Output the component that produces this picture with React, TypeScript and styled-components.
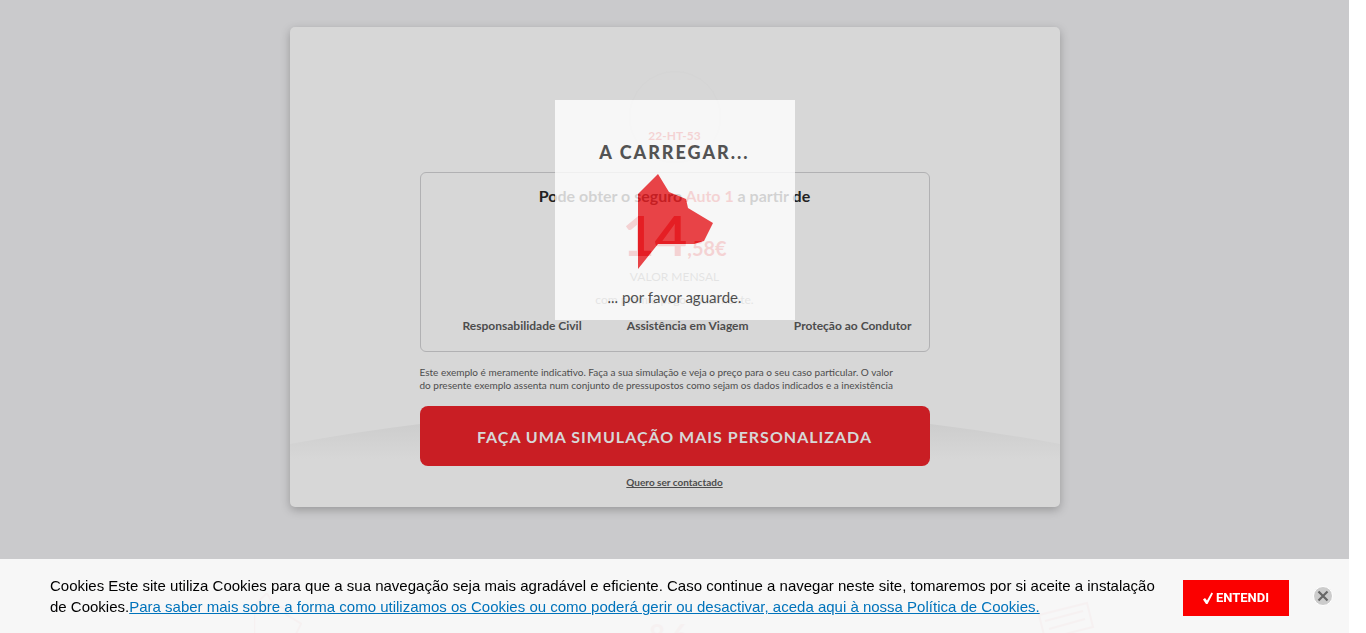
import React from "react";
import styled, { createGlobalStyle } from "styled-components";

const GlobalStyle = createGlobalStyle`
  * { box-sizing: border-box; }
  html, body { margin: 0; padding: 0; background: #fff; }
  body { font-family: Lato, "Liberation Sans", sans-serif; color: #4d4d4d; }
  h1, h2, p, ul { margin: 0; padding: 0; }
`;

const Page = styled.div`
  position: relative;
  height: 100vh;
  margin-right: 17px;
  padding-top: 27px;
  overflow: hidden;
  background: #cacacc;
`;

const Card = styled.main`
  position: relative;
  display: flex;
  flex-direction: column;
  align-items: center;
  max-width: 770px;
  min-height: 480px;
  margin: 0 auto;
  padding: 44px 24px 16px;
  border-radius: 5px;
  background: #d7d7d7;
  box-shadow: 0 3px 10px rgba(0, 0, 0, 0.25);
`;

const Wave = styled.svg`
  position: absolute;
  left: 0;
  bottom: 48px;
  width: 100%;
  height: 50px;
`;

const Content = styled.div`
  position: relative;
  display: flex;
  flex-direction: column;
  width: 100%;
  max-width: 510px;
`;

const PlateBadge = styled.div`
  display: flex;
  align-items: center;
  justify-content: center;
  width: 92px;
  height: 92px;
  margin: 0 auto 9px;
  padding-top: 36px;
  border: 1px solid #d5d5d5;
  border-radius: 50%;
  color: #c91e24;
  font-size: 12px;
  font-weight: 700;
  white-space: nowrap;
`;

const Quote = styled.section`
  display: flex;
  flex-direction: column;
  align-items: center;
  min-height: 180px;
  padding-top: 13px;
  border: 1px solid #b1b1b3;
  border-radius: 6px;
`;

const QuoteTitle = styled.h1`
  font-size: 16px;
  line-height: 20px;
  font-weight: 700;
  color: #222;
`;

const Accent = styled.span`
  color: #c91e24;
`;

const Price = styled.p`
  display: flex;
  align-items: baseline;
  height: 59px;
  line-height: 58px;
  font-size: 56px;
  font-weight: 700;
  color: #c91e24;
`;

const Cents = styled.span`
  font-size: 20px;
`;

const Note = styled.p`
  font-size: 12px;
  line-height: 23px;
  color: #777;
`;

const Covers = styled.ul`
  display: flex;
  justify-content: space-between;
  width: 100%;
  padding: 5px 17px 0 42px;
  list-style: none;
  font-size: 12px;
  line-height: 20px;
  font-weight: 700;
`;

const Disclaimer = styled.p`
  max-width: 480px;
  margin-top: 14px;
  font-size: 10px;
  line-height: 13px;
`;

const MainButton = styled.button`
  height: 60px;
  margin-top: 14px;
  border: 0;
  border-radius: 8px;
  background: #c91e24;
  color: #d7d7d7;
  font-family: inherit;
  font-size: 16px;
  font-weight: 700;
  letter-spacing: 1px;
`;

const ContactLink = styled.a`
  align-self: center;
  margin-top: 10px;
  color: #4d4d4d;
  font-size: 10px;
  line-height: 13px;
  font-weight: 700;
`;

const Loader = styled.div`
  position: absolute;
  top: 100px;
  left: 50%;
  display: flex;
  flex-direction: column;
  align-items: center;
  width: 240px;
  height: 220px;
  margin-left: -120px;
  padding-top: 40px;
  background: #fff;
  opacity: 0.8;
  color: #333;
`;

const LoaderTitle = styled.h2`
  font-size: 18px;
  line-height: 24px;
  font-weight: 900;
  letter-spacing: 2px;
`;

const LoaderMark = styled.svg`
  width: 78px;
  height: 96px;
  margin-top: 10px;
`;

const LoaderText = styled.p`
  margin-top: 17px;
  font-size: 15px;
  line-height: 20px;
`;

const Awards = styled.section`
  display: flex;
  justify-content: space-between;
  max-width: 842px;
  margin: 86px auto 0;
  color: #c91e24;
  opacity: 0.2;
`;

const Score = styled.span`
  padding-top: 24px;
  font-size: 28px;
  line-height: 34px;
  font-weight: 700;
`;

const CookieBar = styled.aside`
  position: fixed;
  left: 0;
  right: 17px;
  bottom: 0;
  display: flex;
  align-items: center;
  min-height: 74px;
  padding: 0 16px 0 50px;
  background: rgba(255, 255, 255, 0.84);
  font-family: "Liberation Sans", Arial, sans-serif;
`;

const CookieText = styled.p`
  flex: 1;
  margin-right: 24px;
  color: #000;
  font-size: 15px;
  line-height: 21px;
`;

const CookieLink = styled.a`
  color: #0073bb;
`;

const AcceptButton = styled.button`
  display: flex;
  align-items: center;
  justify-content: center;
  gap: 3px;
  width: 106px;
  height: 36px;
  margin-top: 4px;
  border: 0;
  background: #fb0000;
  color: #fff;
  font: 700 13px/16px Roboto, "Liberation Sans", sans-serif;
`;

const CloseButton = styled.button`
  display: flex;
  width: 20px;
  height: 20px;
  margin-left: 24px;
  padding: 0;
  border: 0;
  background: none;
`;

const MARK = "M20 0 31 18 48 25 50 34 75 49 66 67 56 70 20 70 0 95V20Z";

export default function App() {
  return (
    <>
      <GlobalStyle />
      <Page>
        <Card>
          <Wave viewBox="0 0 770 50" preserveAspectRatio="none" aria-hidden="true">
            <defs>
              <linearGradient id="fade" x1="0" y1="0" x2="0" y2="1">
                <stop offset="0" stopColor="#cdcdcd" />
                <stop offset="1" stopColor="#d7d7d7" />
              </linearGradient>
            </defs>
            <path d="M0 35Q65 23 130 15H640Q705 23 770 35V50H0Z" fill="url(#fade)" />
          </Wave>
          <Content>
            <PlateBadge>22-HT-53</PlateBadge>
            <Quote>
              <QuoteTitle>
                Pode obter o seguro <Accent>Auto 1</Accent> a partir de
              </QuoteTitle>
              <Price>
                14<Cents>,58€</Cents>
              </Price>
              <Note>VALOR MENSAL</Note>
              <Note>com prémio pago anualmente.</Note>
              <Covers>
                <li>Responsabilidade Civil</li>
                <li>Assistência em Viagem</li>
                <li>Proteção ao Condutor</li>
              </Covers>
            </Quote>
            <Disclaimer>
              Este exemplo é meramente indicativo. Faça a sua simulação e veja o preço para o seu caso
              particular. O valor do presente exemplo assenta num conjunto de pressupostos como sejam os
              dados indicados e a inexistência
            </Disclaimer>
            <MainButton type="button">FAÇA UMA SIMULAÇÃO MAIS PERSONALIZADA</MainButton>
            <ContactLink href="#contacto">Quero ser contactado</ContactLink>
          </Content>
        </Card>
        <Awards>
          <svg width="48" height="60" viewBox="0 0 76 96" fill="none" stroke="currentColor" strokeWidth="3">
            <path d={MARK} />
          </svg>
          <Score>8.6</Score>
          <svg width="60" height="60" viewBox="0 0 60 60" fill="none" stroke="currentColor" strokeWidth="2">
            <path d="M4 22 52 10 58 34 10 46ZM10 28 48 18M14 36 50 26" />
          </svg>
        </Awards>
        <Loader role="status">
          <LoaderTitle>A CARREGAR...</LoaderTitle>
          <LoaderMark viewBox="-2 0 78 96" aria-hidden="true">
            <path d={MARK} fill="#ed1f24" />
          </LoaderMark>
          <LoaderText>... por favor aguarde.</LoaderText>
        </Loader>
        <CookieBar aria-label="Cookies">
          <CookieText>
            Cookies Este site utiliza Cookies para que a sua navegação seja mais agradável e eficiente.
            Caso continue a navegar neste site, tomaremos por si aceite a instalação de Cookies.
            <CookieLink href="#cookies">
              Para saber mais sobre a forma como utilizamos os Cookies ou como poderá gerir ou
              desactivar, aceda aqui à nossa Política de Cookies.
            </CookieLink>
          </CookieText>
          <AcceptButton type="button">
            <svg width="10" height="12" viewBox="0 0 10 12" aria-hidden="true">
              <path d="M0 7.5 2 6 4 8.5 8.5 0.5 10 1.5 4.5 12H3Z" fill="#fff" />
            </svg>
            ENTENDI
          </AcceptButton>
          <CloseButton type="button" aria-label="Fechar">
            <svg width="20" height="20" viewBox="0 0 20 20" aria-hidden="true">
              <circle cx="10" cy="10" r="9.5" fill="#ccc" stroke="#fff" />
              <path d="M5.5 5.5 14.5 14.5M14.5 5.5 5.5 14.5" stroke="#666" strokeWidth="2.2" />
            </svg>
          </CloseButton>
        </CookieBar>
      </Page>
    </>
  );
}
